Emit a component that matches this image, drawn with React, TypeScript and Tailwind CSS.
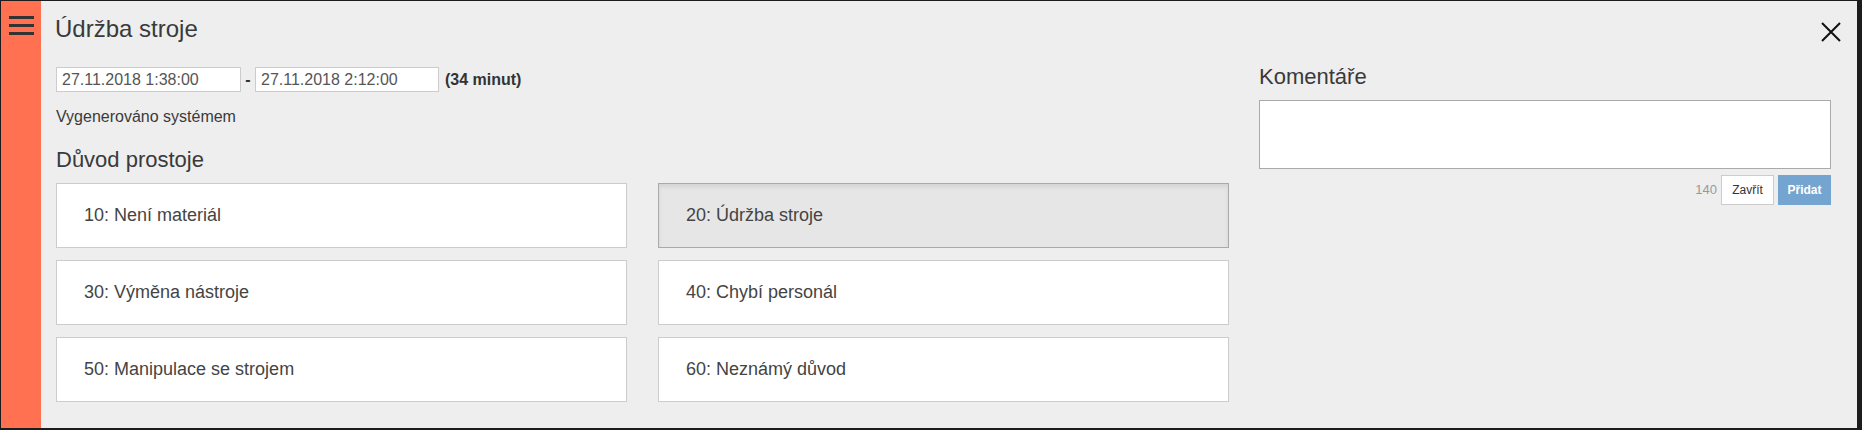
import React from "react";

const reasons = [
  { id: 10, label: "Není materiál" },
  { id: 20, label: "Údržba stroje" },
  { id: 30, label: "Výměna nástroje" },
  { id: 40, label: "Chybí personál" },
  { id: 50, label: "Manipulace se strojem" },
  { id: 60, label: "Neznámý důvod" },
];

function ReasonCard({ id, label, selected }: { id: number; label: string; selected: boolean }) {
  return (
    <button
      className={
        selected
          ? "h-[65px] w-full text-left pl-[27px] text-[18px] text-[#444] bg-[#e6e6e6] border border-[#aaaaaa] shadow-[inset_0_3px_4px_rgba(0,0,0,0.08)]"
          : "h-[65px] w-full text-left pl-[27px] text-[18px] text-[#444] bg-white border border-[#cccccc]"
      }
    >
      {id}: {label}
    </button>
  );
}

export default function App() {
  const selected = 20;

  return (
    <div
      className="w-[1862px] h-[430px] bg-[#1c1c1c] pt-px pl-px pr-[5px] pb-[2px] flex"
      style={{ fontFamily: '"Liberation Sans", Arial, sans-serif' }}
    >
      <aside className="w-[40px] bg-[#ff7150] pt-[15px] pl-[8px]">
        <div className="flex flex-col gap-[5px] w-[25px]">
          <span className="h-[3px] bg-[#333]" />
          <span className="h-[3px] bg-[#333]" />
          <span className="h-[3px] bg-[#333]" />
        </div>
      </aside>

      <main className="flex-1 bg-[#eeeeee] flex flex-col">
        <header className="flex items-start justify-between pl-[14px] pr-[16px] pt-[14px]">
          <h1 className="text-[24px] leading-[28px] text-[#3a3a3a]">Údržba stroje</h1>
          <button className="mt-[7px] w-[20px] h-[20px]" aria-label="Zavřít">
            <svg viewBox="0 0 20 20" className="w-[20px] h-[20px]" stroke="#111" strokeWidth="2">
              <path d="M1 1 L19 19 M19 1 L1 19" />
            </svg>
          </button>
        </header>

        <div className="flex gap-[30px] pl-[15px] mt-[21px]">
          <section className="w-[1173px] pt-[3px]">
            <div className="flex items-center h-[25px]">
              <input
                readOnly
                value="27.11.2018 1:38:00"
                className="w-[185px] h-[25px] bg-white border border-[#cccccc] pl-[5px] text-[16px] text-[#555] outline-none"
              />
              <span className="w-[14px] text-center font-bold text-[16px] text-[#333]">-</span>
              <input
                readOnly
                value="27.11.2018 2:12:00"
                className="w-[184px] h-[25px] bg-white border border-[#cccccc] pl-[5px] text-[16px] text-[#555] outline-none"
              />
              <span className="ml-[6px] font-bold text-[16px] text-[#333]">(34 minut)</span>
            </div>
            <p className="mt-[15px] text-[16px] leading-[20px] text-[#3a3a3a]">Vygenerováno systémem</p>
            <h2 className="mt-[20px] text-[22px] leading-[26px] text-[#3a3a3a]">Důvod prostoje</h2>
            <div className="mt-[10px] grid grid-cols-2 gap-x-[31px] gap-y-[12px]">
              {reasons.map((r) => (
                <ReasonCard key={r.id} id={r.id} label={r.label} selected={r.id === selected} />
              ))}
            </div>
          </section>

          <section className="w-[572px]">
            <h2 className="text-[22px] leading-[26px] text-[#3a3a3a]">Komentáře</h2>
            <textarea className="mt-[10px] block w-full h-[69px] bg-white border border-[#aaaaaa] resize-none outline-none" />
            <div className="mt-[6px] flex justify-end items-center gap-[4px]">
              <span className="text-[13px] text-[#999]">140</span>
              <button className="w-[53px] h-[30px] bg-white border border-[#cccccc] text-[12px] text-[#333]">
                Zavřít
              </button>
              <button className="w-[53px] h-[30px] bg-[#74a5d0] text-[12px] text-white font-bold">
                Přidat
              </button>
            </div>
          </section>
        </div>
      </main>
    </div>
  );
}
